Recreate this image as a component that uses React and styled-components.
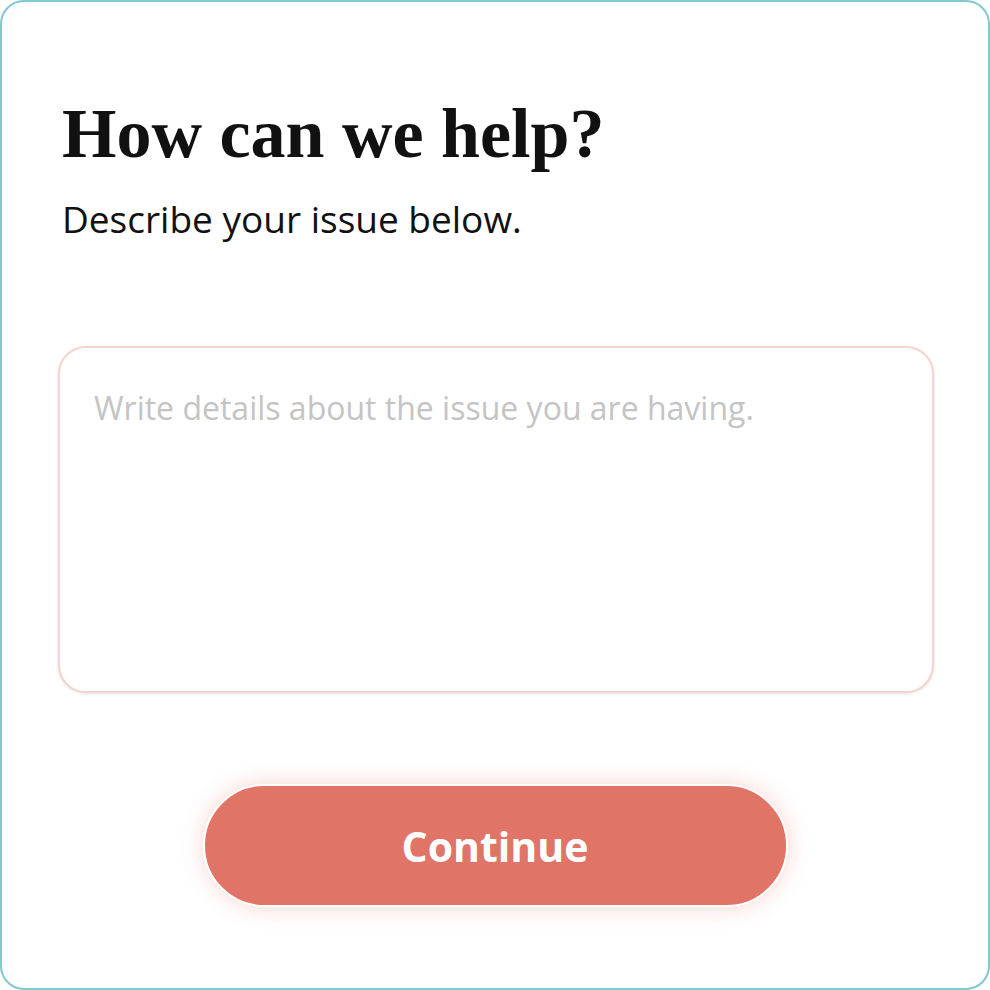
import React from 'react';
import styled, { createGlobalStyle } from 'styled-components';

const GlobalStyle = createGlobalStyle`
  html, body {
    margin: 0;
    padding: 0;
    background: #fff;
  }
  * {
    box-sizing: border-box;
  }
`;

const Card = styled.div`
  width: 990px;
  height: 990px;
  border: 2px solid #80c9cd;
  border-radius: 24px;
  background: #fff;
  padding: 92px 56px 0 56px;
  display: flex;
  flex-direction: column;
`;

const Title = styled.h1`
  margin: 0 0 0 4px;
  font-family: 'Liberation Serif', 'DejaVu Serif', serif;
  font-weight: 700;
  font-size: 70px;
  line-height: 80px;
  color: #111;
`;

const Subtitle = styled.p`
  margin: 22px 0 0 4px;
  font-family: 'Open Sans', 'Noto Sans', sans-serif;
  font-size: 37px;
  line-height: 46px;
  color: #111;
`;

const Details = styled.textarea`
  margin-top: 104px;
  width: 876px;
  height: 347px;
  border: 2px solid #f6d3cf;
  border-radius: 28px;
  box-shadow: 0 1px 3px rgba(0, 0, 0, 0.12);
  padding: 39px 34px;
  font-family: 'Open Sans', 'Noto Sans', sans-serif;
  font-size: 32px;
  line-height: 42px;
  color: #333;
  resize: none;
  outline: none;

  &::placeholder {
    color: #c4c4c4;
  }
`;

const Actions = styled.div`
  display: flex;
  justify-content: center;
  margin-top: 91px;
`;

const Button = styled.button`
  width: 585px;
  height: 123px;
  border-radius: 62px;
  border: 2px solid #fff;
  background: #e07467;
  color: #fff;
  font-family: 'Open Sans', 'Noto Sans', sans-serif;
  font-weight: 700;
  font-size: 41px;
  box-shadow: 0 0 22px rgba(224, 116, 103, 0.3);
  cursor: pointer;
`;

const App = () => {
  return (
    <>
      <GlobalStyle />
      <Card>
        <Title>How can we help?</Title>
        <Subtitle>Describe your issue below.</Subtitle>
        <Details placeholder="Write details about the issue you are having." />
        <Actions>
          <Button type="button">Continue</Button>
        </Actions>
      </Card>
    </>
  );
};

export default App;
